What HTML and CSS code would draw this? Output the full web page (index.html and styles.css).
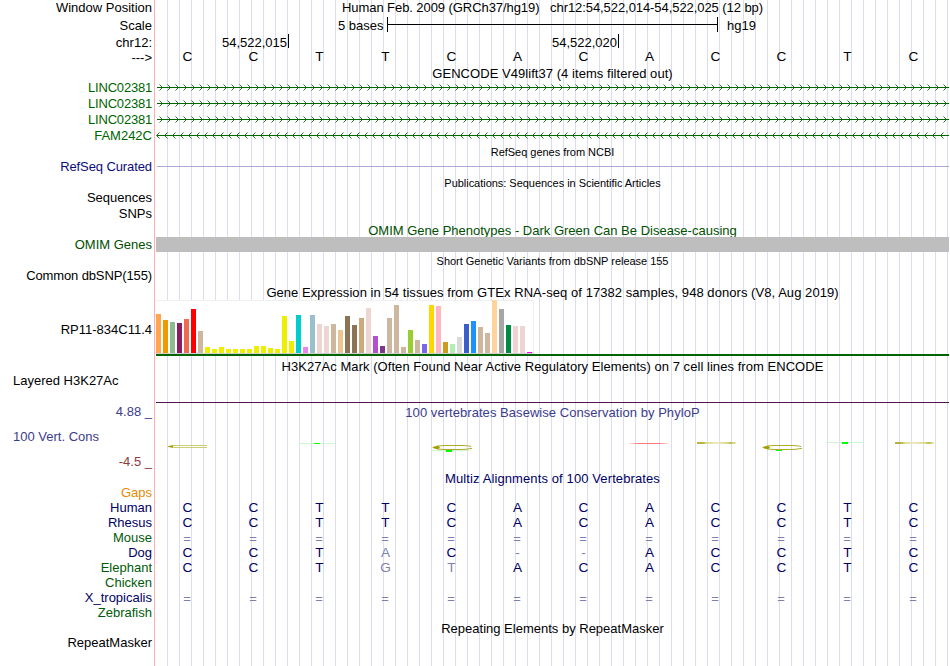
FILE: index.html
```html
<!DOCTYPE html>
<html lang="en">
<head>
<meta charset="utf-8">
<title>Genome Browser - chr12:54,522,014-54,522,025</title>
<link rel="stylesheet" href="styles.css">
</head>
<body>
<main class="browser">
  <div class="row ruler-pos"><div class="label">Window Position</div><div class="data title">Human Feb. 2009 (GRCh37/hg19) &nbsp; chr12:54,522,014-54,522,025 (12 bp)</div></div>
  <div class="row ruler-scale"><div class="label">Scale</div><div class="data scale"><span class="scale-text">5 bases</span><span class="scale-bar"></span><span>hg19</span></div></div>
  <div class="row ruler-coords"><div class="label">chr12:</div><div class="data coords"><span class="coord">54,522,015</span><span class="coord">54,522,020</span></div></div>
  <div class="row ruler-bases"><div class="label">---&gt;</div><div class="data bases"><span>C</span><span>C</span><span>T</span><span>T</span><span>C</span><span>A</span><span>C</span><span>A</span><span>C</span><span>C</span><span>T</span><span>C</span></div></div>

  <div class="row gencode-title"><div class="label"></div><div class="data title">GENCODE V49lift37 (4 items filtered out)</div></div>
  <div class="row gene"><div class="label green tight">LINC02381</div><svg class="data" width="793" height="16"><defs>
    <pattern id="fwd" x="0" y="0" width="8" height="16" patternUnits="userSpaceOnUse"><path d="M3.5 4.5L6.5 7.5L3.5 10.5" class="chevron"/></pattern>
    <pattern id="rev" x="0" y="0" width="8" height="16" patternUnits="userSpaceOnUse"><path d="M3.5 4.5L.5 7.5L3.5 10.5" class="chevron"/></pattern>
    </defs><rect x="1" width="792" height="16" fill="url(#fwd)"/><rect x="1" y="7" width="792" height="1" class="intron"/></svg></div>
  <div class="row gene"><div class="label green tight">LINC02381</div><svg class="data" width="793" height="16"><rect x="1" width="792" height="16" fill="url(#fwd)"/><rect x="1" y="7" width="792" height="1" class="intron"/></svg></div>
  <div class="row gene"><div class="label green tight">LINC02381</div><svg class="data" width="793" height="16"><rect x="1" width="792" height="16" fill="url(#fwd)"/><rect x="1" y="7" width="792" height="1" class="intron"/></svg></div>
  <div class="row gene"><div class="label green">FAM242C</div><svg class="data" width="793" height="16"><rect width="793" height="16" fill="url(#rev)"/><rect x="1" y="7" width="792" height="1" class="intron"/></svg></div>

  <div class="row refseq-title"><div class="label"></div><div class="data title small">RefSeq genes from NCBI</div></div>
  <div class="row refseq"><div class="label blue">RefSeq Curated</div><div class="data"><div class="refseq-line"></div></div></div>
  <div class="row pubs-title"><div class="label"></div><div class="data title small">Publications: Sequences in Scientific Articles</div></div>
  <div class="row pubs"><div class="label">Sequences</div></div>
  <div class="row pubs-snps"><div class="label">SNPs</div></div>
  <div class="row omim-title"><div class="label"></div><div class="data title dark-green">OMIM Gene Phenotypes - Dark Green Can Be Disease-causing</div></div>
  <div class="row omim"><div class="label dark-green">OMIM Genes</div><div class="data omim-bar"></div></div>
  <div class="row snp-title"><div class="label"></div><div class="data title small">Short Genetic Variants from dbSNP release 155</div></div>
  <div class="row snp"><div class="label">Common dbSNP(155)</div></div>

  <div class="row gtex-title"><div class="label"></div><div class="data title">Gene Expression in 54 tissues from GTEx RNA-seq of 17382 samples, 948 donors (V8, Aug 2019)</div></div>
  <div class="row gtex"><div class="label">RP11-834C11.4</div><div class="data gtex-data"><div class="chart" id="chart"></div><div class="gene-model"></div></div></div>

  <div class="row h3k-title"><div class="label"></div><div class="data title">H3K27Ac Mark (Often Found Near Active Regulatory Elements) on 7 cell lines from ENCODE</div></div>
  <div class="row h3k"><div class="label left">Layered H3K27Ac</div><div class="data"><div class="h3k-line"></div></div></div>

  <div class="row phylo-title"><div class="label slate">4.88 _</div><div class="data title slate">100 vertebrates Basewise Conservation by PhyloP</div></div>
  <div class="row phylo">
    <div class="label phylo-labels"><span class="slate">100 Vert. Cons</span><span class="brown">-4.5 _</span></div>
    <svg class="data" width="793" height="50" viewBox="156 420 793 50">
      <defs><linearGradient id="flat"><stop offset="0" stop-color="#b4b43c"/><stop offset=".15" stop-color="#b4b43c"/><stop offset=".25" stop-color="#dcdc96"/><stop offset=".5" stop-color="#ebebc3"/><stop offset=".75" stop-color="#dcdc96"/><stop offset=".87" stop-color="#bebe50"/><stop offset="1" stop-color="#ebebc3"/></linearGradient>
      <linearGradient id="red"><stop offset="0" stop-color="#ff7878" stop-opacity=".2"/><stop offset=".25" stop-color="#ff7878"/><stop offset=".75" stop-color="#ff7878"/><stop offset="1" stop-color="#ff7878" stop-opacity=".2"/></linearGradient></defs>
      <path d="M207 445.5H174L168 446.5L174 447.5H207" class="c-thin"/><path d="M167 446.5L173 445.3V447.7Z" class="c-fill"/>
      <rect x="299" y="443" width="36" height="1" class="t-arm"/><rect x="314" y="443" width="6" height="1" class="t-stem"/>
      <rect x="431" y="450" width="38" height="1" class="t-arm"/><rect x="446" y="450" width="6" height="2" class="t-stem"/>
      <path d="M472 448.3Q466 449.6 460 449.5H444Q437 449.5 433 447.5Q437 445.5 444 445.5H460Q469 445.5 471 446.7" class="c-wide"/><path d="M432 447.5L438 445.8L440 447.5L438 449.2Z" class="c-fill"/>
      <rect x="629" y="443" width="40" height="1" fill="url(#red)"/>
      <rect x="697" y="442" width="39" height="2" fill="url(#flat)"/>
      <path d="M802 448.3Q796 449.6 790 449.5H774Q767 449.5 763 447.5Q767 445.5 774 445.5H790Q799 445.5 801 446.7" class="c-wide"/><path d="M762 447.5L768 445.8L770 447.5L768 449.2Z" class="c-fill"/>
      <rect x="776" y="450" width="6" height="1" class="t-stem"/>
      <rect x="826" y="442" width="38" height="1" class="t-arm"/><rect x="842" y="442" width="6" height="2" class="t-stem"/>
      <rect x="895" y="442" width="39" height="2" fill="url(#flat)"/>
    </svg>
  </div>

  <div class="row multiz-title"><div class="label"></div><div class="data title navy">Multiz Alignments of 100 Vertebrates</div></div>
  <div class="row species"><div class="label orange">Gaps</div></div>
  <div class="row species"><div class="label navy">Human</div><div class="data bases navy"><span>C</span><span>C</span><span>T</span><span>T</span><span>C</span><span>A</span><span>C</span><span>A</span><span>C</span><span>C</span><span>T</span><span>C</span></div></div>
  <div class="row species"><div class="label navy">Rhesus</div><div class="data bases navy"><span>C</span><span>C</span><span>T</span><span>T</span><span>C</span><span>A</span><span>C</span><span>A</span><span>C</span><span>C</span><span>T</span><span>C</span></div></div>
  <div class="row species"><div class="label forest">Mouse</div><div class="data bases gap"><span>=</span><span>=</span><span>=</span><span>=</span><span>=</span><span>=</span><span>=</span><span>=</span><span>=</span><span>=</span><span>=</span><span>=</span></div></div>
  <div class="row species"><div class="label navy">Dog</div><div class="data bases navy"><span>C</span><span>C</span><span>T</span><span class="pale">A</span><span>C</span><span class="pale">-</span><span class="pale">-</span><span>A</span><span>C</span><span>C</span><span>T</span><span>C</span></div></div>
  <div class="row species"><div class="label forest">Elephant</div><div class="data bases navy"><span>C</span><span>C</span><span>T</span><span class="pale">G</span><span class="pale">T</span><span>A</span><span>C</span><span>A</span><span>C</span><span>C</span><span>T</span><span>C</span></div></div>
  <div class="row species"><div class="label forest">Chicken</div></div>
  <div class="row species"><div class="label navy">X_tropicalis</div><div class="data bases gap"><span>=</span><span>=</span><span>=</span><span>=</span><span>=</span><span>=</span><span>=</span><span>=</span><span>=</span><span>=</span><span>=</span><span>=</span></div></div>
  <div class="row species"><div class="label forest">Zebrafish</div></div>
  <div class="row repeat-title"><div class="label"></div><div class="data title">Repeating Elements by RepeatMasker</div></div>
  <div class="row species"><div class="label">RepeatMasker</div></div>
</main>
<script src="chart.js"></script>
</body>
</html>
```

FILE: styles.css
```css
body { margin: 0; background: #fff; }
.browser {
  width: 949px;
  height: 666px;
  overflow: hidden;
  font: 13px/16px "Liberation Sans", Arial, sans-serif;
  color: #000;
  background:
    linear-gradient(#ffb0b0, #ffb0b0) 154px 0 / 1px 100% no-repeat,
    repeating-linear-gradient(90deg, #dcdcf5 0 1px, transparent 1px 12px) 167px 0 / 782px 100% no-repeat;
}
.row { display: grid; grid-template-columns: 152px 793px; column-gap: 4px; height: 16px; white-space: pre; }
.label { text-align: right; }
.label.left { text-align: left; padding-left: 13px; }
.title { text-align: center; }
.small { font-size: 11px; letter-spacing: -.03px; }
.data { display: block; }
.bases { display: grid; grid-template-columns: repeat(12, 66px); text-align: center; margin-left: -1.5px; font-size: 13.6px; }
.tight { letter-spacing: -.2px; }

.green { color: #006400; }
.dark-green { color: #005000; }
.forest { color: #005a0a; }
.blue { color: #0c0c78; }
.navy { color: #000064; }
.slate { color: #3c3c8c; }
.brown { color: #8c3c3c; }
.orange { color: #e68a00; }
.pale, .gap { color: #8080b0; }

.ruler-pos { height: 17px; }
.ruler-pos .title { line-height: 15px; letter-spacing: -.07px; }
.ruler-scale { height: 17px; line-height: 17px; }
.ruler-scale .label { line-height: 18px; }
.scale { display: flex; padding-left: 182px; }
.scale-text { width: 45px; margin-right: 4px; }
.scale-bar {
  width: 329px; height: 15px; margin-right: 9px;
  border: solid #000; border-width: 0 1px;
  background: linear-gradient(#000, #000) 0 7px / 100% 1px no-repeat;
}
.ruler-coords { height: 16px; line-height: 18px; }
.coords { display: flex; }
.coord { box-sizing: border-box; width: 133px; height: 14px; border-right: 1px solid #000; padding-right: 1px; text-align: right; }
.coord + .coord { width: 330px; }
.ruler-bases { height: 15px; }
.ruler-bases .bases { line-height: 14px; }
.gencode-title { height: 15px; line-height: 18px; }
.gencode-title .title { letter-spacing: .05px; }
.chevron { fill: none; stroke: #006400; stroke-width: .9; }
.intron { fill: #006400; }
.refseq-title { height: 15px; }
.refseq { height: 16px; }
.refseq .label { letter-spacing: -.1px; }
.refseq-line { height: 1px; margin: 7px 0 0 1px; background: #a9a9d4; }
.pubs-title { height: 15px; }
.pubs { height: 16px; }
.pubs-snps { height: 17px; }
.omim-title { height: 14px; }
.omim { height: 15px; line-height: 15px; }
.omim-bar { background: #bebebe; }
.snp-title { height: 16px; line-height: 18px; }
.snp { height: 17px; }
.snp .label { letter-spacing: -.12px; }
.gtex-title { height: 15px; }
.gtex-title .title { letter-spacing: .055px; }
.gtex { height: 56px; line-height: 60px; }
.chart {
  box-sizing: border-box; width: 378px; height: 54px;
  display: flex; align-items: flex-end; gap: 2px;
  background: #fff; border: solid #f0f0f0; border-width: 1px 1px 0 0;
  border-bottom: 1px solid #d0d0d0;
}
.bar { width: 5px; flex: none; }
.gene-model { height: 2px; background: #006400; }
.h3k-title { height: 16px; line-height: 21px; }
.h3k-title .title { letter-spacing: .05px; }
.h3k { height: 33px; line-height: 18px; }
.h3k-line { height: 1px; margin-top: 30px; background: #501450; }
.phylo-title { height: 15px; line-height: 15px; }
.phylo-title .title { letter-spacing: .05px; }
.phylo-title .label { line-height: 14px; }
.phylo { height: 50px; }
.phylo-labels { display: flex; flex-direction: column; gap: 9px; padding: 9px 0 0 13px; }
.phylo-labels .slate { align-self: flex-start; }
.c-thin { fill: none; stroke: #c8c864; stroke-width: .9; }
.c-wide { fill: none; stroke: #acac28; stroke-width: 1; }
.c-fill { fill: #a0a000; }
.t-arm { fill: #cdf5d2; }
.t-stem { fill: #00ff00; }
.multiz-title { height: 15px; line-height: 18px; }
.multiz-title .title { letter-spacing: .11px; }
.species { height: 15px; line-height: 15px; }
.species .gap { line-height: 17px; font-size: 13px; margin-left: -2px; }
.repeat-title { height: 15px; line-height: 18px; }
```

FILE: chart.js
```js
// Median expression per tissue: [colour, height in pixels]
const tissues = [
  ["#ffa54f", 39], ["#ee9a00", 33], ["#8fbc8f", 31], ["#8b1c62", 30], ["#ee6a50", 34], ["#ff0000", 44], ["#cdb79e", 22],
  ["#eeee00", 6], ["#eeee00", 4], ["#eeee00", 6], ["#eeee00", 4], ["#eeee00", 4], ["#eeee00", 4], ["#eeee00", 4],
  ["#eeee00", 7], ["#eeee00", 7], ["#eeee00", 5], ["#eeee00", 4], ["#eeee00", 37], ["#eeee00", 12],
  ["#00cdcd", 38], ["#ee82ee", 6], ["#9ac0cd", 38], ["#eed5d2", 29], ["#eed5d2", 27], ["#cdb79e", 29], ["#eec591", 23],
  ["#8b7355", 37], ["#8b7355", 28], ["#cdaa7d", 35], ["#eed5d2", 45], ["#b452cd", 17], ["#7a378b", 7],
  ["#cdb79e", 35], ["#cdb79e", 48], ["#cdb79e", 6], ["#9acd32", 23], ["#cdb79e", 13], ["#7a67ee", 9],
  ["#ffd700", 48], ["#ffb6c1", 47], ["#cd9b1d", 11], ["#b4eeb4", 9], ["#d9d9d9", 16], ["#3a5fcd", 29], ["#1e90ff", 32],
  ["#cdb79e", 26], ["#cdb79e", 20], ["#ffd39b", 53], ["#a6a6a6", 44], ["#008b45", 28], ["#eed5d2", 27], ["#eed5d2", 27],
  ["#ff00ff", 1]
];
const chart = document.getElementById("chart");
for (const [color, height] of tissues) {
  const bar = document.createElement("div");
  bar.className = "bar";
  bar.style.background = color;
  bar.style.height = height + "px";
  chart.appendChild(bar);
}
```
